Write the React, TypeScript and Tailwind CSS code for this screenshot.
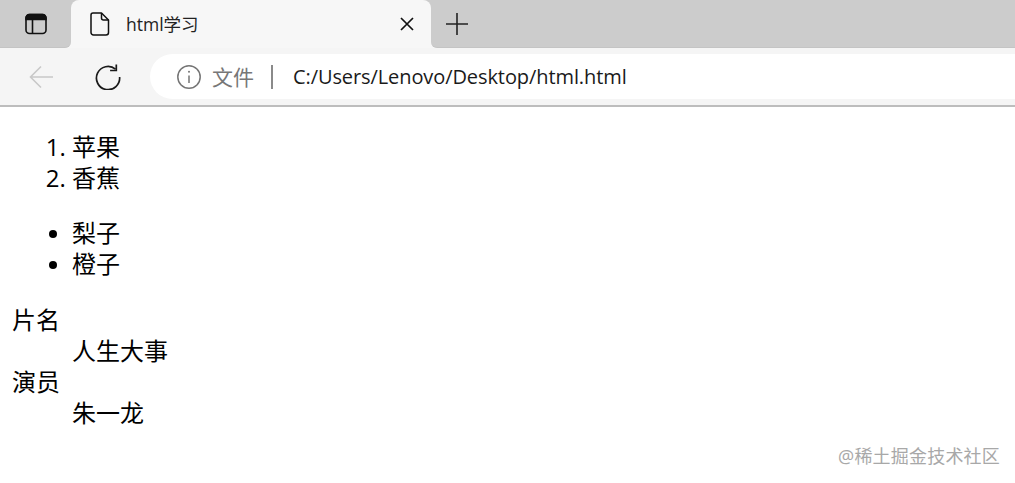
import React from 'react';

const ui = "font-['Open_Sans','Noto_Sans_CJK_SC',sans-serif]";

const App: React.FC = () => {
  return (
    <div className={`relative h-[483px] w-[1015px] overflow-hidden bg-white text-black ${ui}`}>
      {/* Tab strip */}
      <div className="flex h-12 bg-[#cccccc]">
        <div className="w-[71px] bg-[#f7f7f7]">
          <div className="flex h-12 items-center justify-center rounded-br-md border-b border-[#c4c4c4] bg-[#cccccc] pl-[1px]">
            <svg width="22" height="22" viewBox="0 0 22 22" fill="none" stroke="#111" strokeWidth="1.6">
              <rect x="1" y="1.5" width="20" height="19" rx="3.5" />
              <path d="M1 6.5V5a3.5 3.5 0 0 1 3.5-3.5h13A3.5 3.5 0 0 1 21 5v1.5z" fill="#111" />
              <path d="M7.5 6.5v14" />
            </svg>
          </div>
        </div>
        <div className="flex w-[360px] items-center rounded-t-lg bg-[#f7f7f7] pr-[17px] pl-[19px]">
          <svg width="20" height="24" viewBox="0 0 20 24" fill="none" stroke="#111" strokeWidth="1.5" strokeLinejoin="round">
            <path d="M3 1h8.5L18.5 8v12.5a2.5 2.5 0 0 1-2.5 2.5H3.5A2.5 2.5 0 0 1 1 20.5V3a2 2 0 0 1 2-2z" />
            <path d="M11.5 1v5a2 2 0 0 0 2 2h5" />
          </svg>
          <span className="ml-[16px] flex-1 text-[17.5px] leading-6 text-[#222]">html学习</span>
          <svg width="14" height="14" viewBox="0 0 14 14" fill="none" stroke="#111" strokeWidth="1.7">
            <path d="M1 1l12 12M13 1L1 13" />
          </svg>
        </div>
        <div className="flex-1 bg-[#f7f7f7]">
          <div className="flex h-12 items-center rounded-bl-md border-b border-[#c4c4c4] bg-[#cccccc] pl-[15px]">
            <svg width="22" height="22" viewBox="0 0 22 22" fill="none" stroke="#222" strokeWidth="1.6">
              <path d="M11 0v22M0 11h22" />
            </svg>
          </div>
        </div>
      </div>

      {/* Toolbar */}
      <div className="flex h-[59px] items-start border-b-2 border-[#bdbdbd] bg-[#f5f5f5] pt-[6px]">
        <div className="flex h-[45px] w-[150px] items-center">
          <svg className="ml-[29px]" width="24" height="24" viewBox="0 0 24 24" fill="none" stroke="#c8c8c8" strokeWidth="1.6">
            <path d="M24 12H1.5M12 1.5L1.5 12 12 22.5" />
          </svg>
          <svg className="ml-[42px]" width="26" height="26" viewBox="0 0 26 26" fill="none" stroke="#1a1a1a" strokeWidth="1.7">
            <path d="M20.5 5.2A11.6 11.6 0 1 0 24.6 13" />
            <path d="M21.3 0.5v6h-6.2" />
          </svg>
        </div>
        <div className="flex h-[45px] flex-1 items-center rounded-l-[23px] bg-white pl-[27px]">
          <svg width="24" height="24" viewBox="0 0 24 24" fill="none" stroke="#757575" strokeWidth="1.5">
            <circle cx="12" cy="12" r="11.2" />
            <path d="M12 10.5v7.5" />
            <circle cx="12" cy="6.8" r="1" fill="#757575" stroke="none" />
          </svg>
          <span className="ml-[11px] text-[21px] leading-7 text-[#777]">文件</span>
          <div className="ml-[17px] h-[24px] w-[2px] bg-[#8a8a8a]" />
          <span className="ml-[20px] text-[20px] leading-7 tracking-[-0.09px] text-[#1a1a1a]">C:/Users/Lenovo/Desktop/html.html</span>
        </div>
      </div>

      {/* Page */}
      <div className="px-3 text-[24px] leading-[31px]">
        <ol className="my-6 list-decimal pl-[60px]">
          <li>苹果</li>
          <li>香蕉</li>
        </ol>
        <ul className="my-6 list-disc pl-[60px] marker:text-[23px]">
          <li>梨子</li>
          <li>橙子</li>
        </ul>
        <dl className="mt-[25px] mb-6">
          <dt>片名</dt>
          <dd className="ml-[60px]">人生大事</dd>
          <dt>演员</dt>
          <dd className="ml-[60px]">朱一龙</dd>
        </dl>
      </div>

      {/* Watermark */}
      <div className="absolute top-[444px] right-[15px] text-[18px] leading-6 tracking-[0.2px] text-[#a8a8a8]">@稀土掘金技术社区</div>
    </div>
  );
};

export default App;
